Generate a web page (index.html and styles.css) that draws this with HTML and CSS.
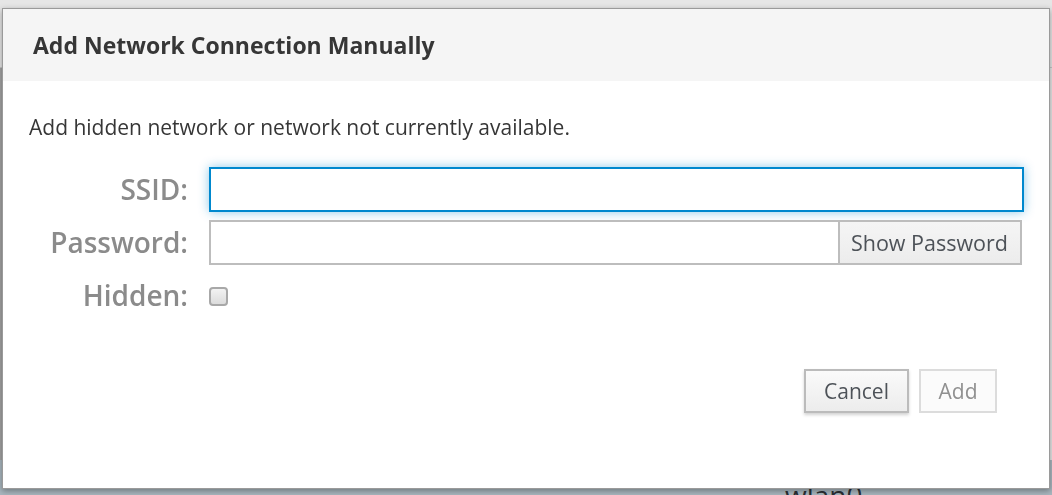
FILE: index.html
```html
<!DOCTYPE html>
<html lang="en">
<head>
<meta charset="utf-8">
<title>Add Network Connection Manually</title>
<link rel="stylesheet" href="styles.css">
</head>
<body>
<div class="page">
  <div class="page-top"></div>
  <div class="page-main"></div>
  <div class="page-footer"><span class="iface">wlan0</span></div>
</div>

<div class="modal" role="dialog" aria-labelledby="modal-title">
  <div class="modal-header">
    <h4 class="modal-title" id="modal-title">Add Network Connection Manually</h4>
  </div>
  <div class="modal-body">
    <p class="intro">Add hidden network or network not currently available.</p>
    <div class="form">
      <label class="control-label" for="ssid">SSID:</label>
      <input class="form-control focused" id="ssid" type="text">

      <label class="control-label" for="password">Password:</label>
      <div class="input-group">
        <input class="form-control grouped" id="password" type="password">
        <button class="btn btn-addon" type="button">Show Password</button>
      </div>

      <label class="control-label" for="hidden">Hidden:</label>
      <div class="check-cell"><input class="checkbox" id="hidden" type="checkbox"></div>
    </div>
  </div>
  <div class="modal-footer">
    <button class="btn btn-default" type="button">Cancel</button>
    <button class="btn btn-primary-disabled" type="button" disabled>Add</button>
  </div>
</div>
</body>
</html>
```

FILE: styles.css
```css
* { box-sizing: border-box; }

html, body {
  margin: 0;
  padding: 0;
  height: 100%;
  overflow: hidden;
  font-family: "Open Sans", "Noto Sans", "Liberation Sans", sans-serif;
}

.page {
  display: flex;
  flex-direction: column;
  height: 100vh;
  background: #e6e6e6;
}

.page-top {
  height: 68px;
  border-bottom: 1px solid #c6c6c6;
}

.page-main {
  flex: 1;
  border-left: 2px solid #a3a3a3;
}

.page-footer {
  height: 35px;
  background: #a9b7bf;
  padding: 21px 0 0 785px;
  overflow: hidden;
}

.iface {
  font-size: 28px;
  line-height: 28px;
  color: #2a2f33;
}

.modal {
  position: fixed;
  left: 2px;
  top: 8px;
  width: 1048px;
  height: 481px;
  background: #fff;
  border: 1px solid #9a9a9a;
  box-shadow: 0 2px 6px rgba(0, 0, 0, 0.35);
  display: flex;
  flex-direction: column;
}

.modal-header {
  height: 72px;
  background: #f5f5f5;
  display: flex;
  align-items: center;
  padding: 0 30px;
}

.modal-title {
  margin: 0;
  font-size: 23px;
  font-weight: 700;
  color: #363636;
}

.modal-body {
  padding: 0 25px;
}

.intro {
  margin: 31px 0 0 0;
  font-size: 21px;
  line-height: 30px;
  color: #363636;
  padding-left: 1px;
}

.form {
  margin-top: 25px;
  display: grid;
  grid-template-columns: 160px 1fr;
  grid-auto-rows: 45px;
  column-gap: 21px;
  row-gap: 8px;
  align-items: center;
}

.control-label {
  text-align: right;
  font-size: 28px;
  font-weight: 600;
  color: #8b8b8b;
  line-height: 45px;
}

.form-control {
  height: 45px;
  width: 100%;
  border: 2px solid #bdbdbd;
  background: #fff;
  font: inherit;
  font-size: 21px;
  padding: 0 10px;
  margin: 0;
  outline: none;
}

.form-control.focused {
  border-color: #0088ce;
  box-shadow: 0 0 10px rgba(0, 136, 206, 0.45);
}

.input-group {
  display: flex;
  height: 45px;
  margin-right: 2px;
}

.form-control.grouped {
  flex: 1;
  border-right: none;
}

.btn {
  font-family: inherit;
  font-size: 21px;
  margin: 0;
  cursor: pointer;
}

.btn-addon {
  height: 45px;
  padding: 0 12px 0 11px;
  font-size: 21.5px;
  border: 2px solid #bdbdbd;
  background: linear-gradient(#f5f5f5, #ececec);
  color: #4d5258;
}

.check-cell {
  display: flex;
  align-items: center;
  height: 45px;
  padding-top: 2px;
}

.checkbox {
  appearance: none;
  -webkit-appearance: none;
  width: 19px;
  height: 19px;
  margin: 0;
  border: 2px solid #a8a8a8;
  border-radius: 4px;
  background: linear-gradient(#f2f2f2, #dcdcdc);
}

.modal-footer {
  display: flex;
  justify-content: flex-end;
  gap: 10px;
  padding: 51px 52px 0 0;
}

.btn-default {
  height: 44px;
  width: 105px;
  border: 2px solid #bbbbbb;
  background: linear-gradient(#fafafa, #ececec);
  color: #4d5258;
  box-shadow: 0 2px 3px rgba(0, 0, 0, 0.18);
}

.btn-primary-disabled {
  height: 44px;
  width: 78px;
  border: 2px solid #dcdcdc;
  background: #fbfbfb;
  color: #909090;
  cursor: default;
}
```
